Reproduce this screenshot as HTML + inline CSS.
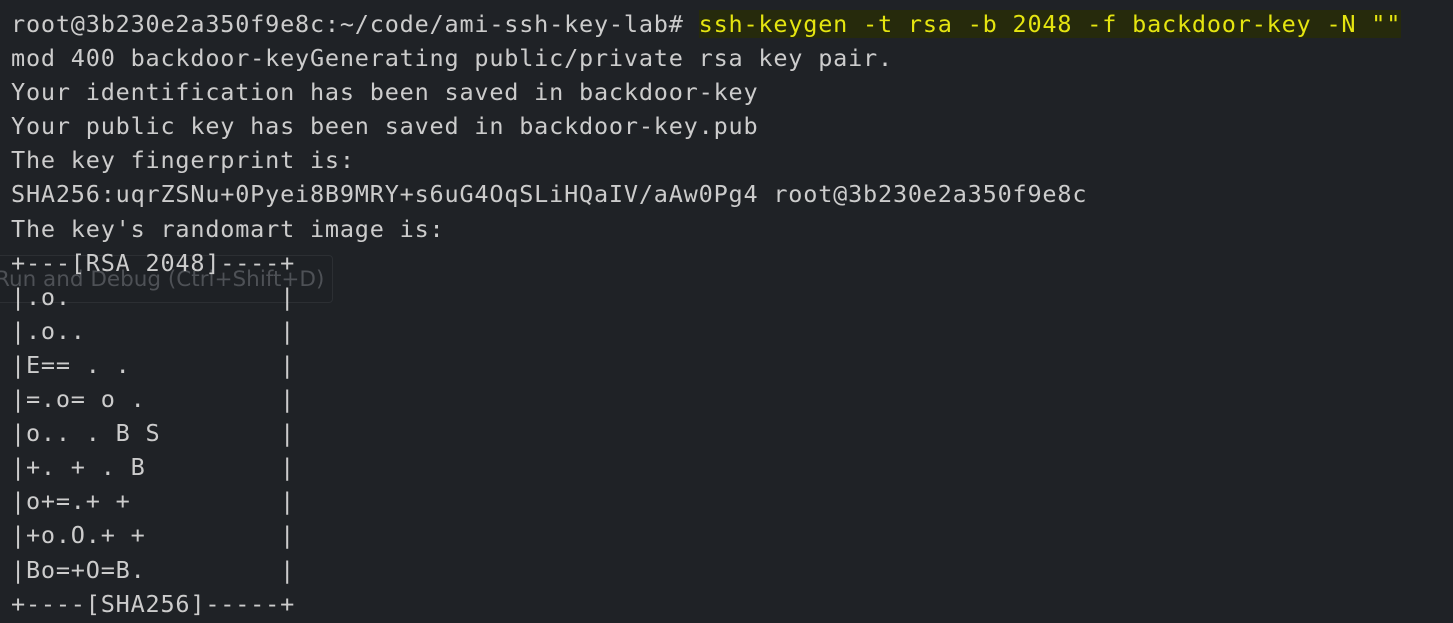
<!DOCTYPE html>
<html><head><style>
html,body{margin:0;padding:0;background:#1f2226;width:1453px;height:623px;overflow:hidden}
pre{margin:0;position:absolute;left:11px;top:7px;font-family:"DejaVu Sans Mono","Liberation Mono",monospace;font-size:23.5px;letter-spacing:0.8px;line-height:34.1px;color:#cccccc;z-index:1}
.y{color:#e5e510;background:#262a0c}
.tip{position:absolute;left:-6px;top:255px;width:337px;height:46px;border:1px solid #2c2f33;border-radius:4px;background:rgba(31,34,38,0.3);font-family:"DejaVu Sans","Liberation Sans",sans-serif;font-size:21.5px;color:#4e5156;line-height:48px;white-space:nowrap;z-index:0}
</style></head><body>
<div class="tip">Run and Debug (Ctrl+Shift+D)</div>
<pre>root@3b230e2a350f9e8c:~/code/ami-ssh-key-lab# <span class="y">ssh-keygen -t rsa -b 2048 -f backdoor-key -N ""</span>
mod 400 backdoor-keyGenerating public/private rsa key pair.
Your identification has been saved in backdoor-key
Your public key has been saved in backdoor-key.pub
The key fingerprint is:
SHA256:uqrZSNu+0Pyei8B9MRY+s6uG4OqSLiHQaIV/aAw0Pg4 root@3b230e2a350f9e8c
The key's randomart image is:
+---[RSA 2048]----+
|.o.              |
|.o..             |
|E== . .          |
|=.o= o .         |
|o.. . B S        |
|+. + . B         |
|o+=.+ +          |
|+o.O.+ +         |
|Bo=+O=B.         |
+----[SHA256]-----+</pre>
</body></html>
